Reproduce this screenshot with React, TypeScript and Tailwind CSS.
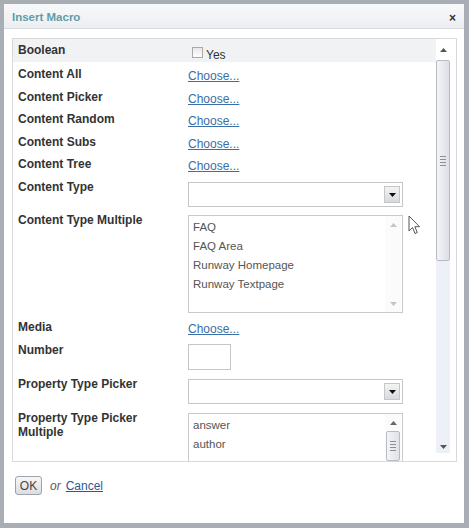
import React from "react";

const label = "text-[12px] font-bold text-[#333] leading-[22px]";
const link = "text-[12px] text-[#3a6ea5] underline leading-[22px]";

function Choose() {
  return <a href="#" className={link}>Choose...</a>;
}

function Row({ name, h, children }: { name: string; h: string; children?: React.ReactNode }) {
  return (
    <div className={`flex items-start ${h}`}>
      <div className={`w-[170px] shrink-0 pt-[1px] ${label}`}>{name}</div>
      <div className="flex-1 pt-[1px]">{children}</div>
    </div>
  );
}

function DropButton() {
  return (
    <div className="flex h-[17px] w-[16px] items-center justify-center border border-[#c4c7cc] bg-gradient-to-b from-[#f4f4f4] to-[#d8d9dc]">
      <svg width="7" height="4" viewBox="0 0 7 4">
        <path d="M0 0h7L3.5 4z" fill="#111" />
      </svg>
    </div>
  );
}

function Select() {
  return (
    <div className="mt-[6px] flex h-[25px] w-[215px] items-center justify-end border border-[#c6c6c6] bg-white pr-[2px]">
      <DropButton />
    </div>
  );
}

function Arrow({ up, color = "#777" }: { up?: boolean; color?: string }) {
  return (
    <svg width="7" height="4" viewBox="0 0 7 4">
      <path d={up ? "M0 4h7L3.5 0z" : "M0 0h7L3.5 4z"} fill={color} />
    </svg>
  );
}

function Grip() {
  return (
    <div className="flex flex-col gap-[2px]">
      <div className="h-px w-[6px] bg-[#8a8f98]" />
      <div className="h-px w-[6px] bg-[#8a8f98]" />
      <div className="h-px w-[6px] bg-[#8a8f98]" />
      <div className="h-px w-[6px] bg-[#8a8f98]" />
    </div>
  );
}

function ListBox({ items, thumb }: { items: string[]; thumb?: boolean }) {
  return (
    <div className="mt-[6px] flex h-[98px] w-[215px] border border-[#c9c9c9] bg-white">
      <div className="flex-1 pl-[4px] pt-[2px]">
        {items.map((i) => (
          <div key={i} className="text-[11.5px] leading-[19px] text-[#555]">
            {i}
          </div>
        ))}
      </div>
      <div className="mr-[1px] flex w-[16px] flex-col items-center bg-[#fbfbfc]">
        <div className="flex h-[17px] items-center justify-center">
          <Arrow up color={thumb ? "#666" : "#c4c4c4"} />
        </div>
        {thumb ? (
          <div className="flex h-[30px] w-[14px] items-center justify-center rounded-[2px] border border-[#b7bcc4] bg-gradient-to-r from-[#f3f4f6] to-[#dfe2e7]">
            <Grip />
          </div>
        ) : (
          <>
            <div className="flex-1" />
            <div className="flex h-[16px] items-center justify-center">
              <Arrow color="#c4c4c4" />
            </div>
          </>
        )}
      </div>
    </div>
  );
}

export default function App() {
  return (
    <div className="relative h-[528px] w-[469px] bg-[#a9aeb5] pl-[4px] pt-[4px] font-['Liberation_Sans',Arial,sans-serif]">
      <div className="flex h-[519px] w-[460px] flex-col bg-white">
        {/* title bar */}
        <div className="flex h-[25px] shrink-0 items-center justify-between border-b border-[#d6d9dd] bg-gradient-to-b from-[#f8f9fa] to-[#eceef1] pl-[8px] pr-[8px] pt-[3px]">
          <span className="text-[11.5px] font-bold text-[#5d9ea8]">Insert Macro</span>
          <span className="text-[12px] font-bold leading-none text-[#333]">×</span>
        </div>

        {/* property panel */}
        <div className="ml-[8px] mt-[9px] flex h-[424px] w-[445px] border border-[#d9d9d9] bg-white">
          <div className="flex-1 overflow-hidden">
            <div className="flex h-[23px] items-start bg-[#f1f2f4] pl-[5px]">
              <div className={`w-[170px] shrink-0 ${label}`}>Boolean</div>
              <div className="ml-[4px] mt-[8px] h-[11px] w-[11px] border border-[#a9a9a9] bg-gradient-to-b from-[#e8e8e8] to-white" />
              <span className="ml-[3px] mt-[10px] text-[12px] leading-[12px] text-[#333]">Yes</span>
            </div>
            <div className="pl-[5px]">
              <Row name="Content All" h="h-[22.5px]"><Choose /></Row>
              <Row name="Content Picker" h="h-[22.5px]"><Choose /></Row>
              <Row name="Content Random" h="h-[22.5px]"><Choose /></Row>
              <Row name="Content Subs" h="h-[22.5px]"><Choose /></Row>
              <Row name="Content Tree" h="h-[23px]"><Choose /></Row>
              <Row name="Content Type" h="h-[33px]">
                <Select />
              </Row>
              <Row name="Content Type Multiple" h="h-[107px]">
                <ListBox items={["FAQ", "FAQ Area", "Runway Homepage", "Runway Textpage"]} />
              </Row>
              <Row name="Media" h="h-[23px]"><Choose /></Row>
              <Row name="Number" h="h-[34px]">
                <div className="mt-[5px] h-[26px] w-[43px] border border-[#c6c6c6] bg-white" />
              </Row>
              <Row name="Property Type Picker" h="h-[35px]">
                <Select />
              </Row>
              <div className="flex items-start">
                <div className="w-[170px] shrink-0 pt-[4px] text-[12px] font-bold leading-[14px] text-[#333]">
                  Property Type Picker
                  <br />
                  Multiple
                </div>
                <ListBox items={["answer", "author"]} thumb />
              </div>
            </div>
          </div>

          {/* main scrollbar */}
          <div className="mr-[6px] flex w-[14px] flex-col items-center">
            <div className="flex h-[21px] w-full items-center justify-center">
              <Arrow up color="#555" />
            </div>
            <div className="flex h-[201px] w-[14px] items-center justify-center rounded-[2px] border border-[#b6bbc4] bg-gradient-to-r from-[#f4f5f8] to-[#dcdfe6]">
              <Grip />
            </div>
            <div className="w-full flex-1 bg-[#eef0f7]" />
            <div className="flex h-[12px] w-full items-center justify-center bg-[#eef0f7]">
              <Arrow color="#555" />
            </div>
            <div className="h-[8px]" />
          </div>
        </div>

        {/* footer */}
        <div className="ml-[11px] mt-[14px] flex items-center">
          <button className="h-[19px] w-[27px] rounded-[3px] border border-[#9ea4ab] bg-gradient-to-b from-[#f7f7f7] to-[#dcdde0] text-[12px] leading-none text-[#444]">
            OK
          </button>
          <span className="ml-[8px] text-[12px] italic text-[#555]">or</span>
          <a href="#" className="ml-[5px] text-[12px] text-[#2d5797] underline">
            Cancel
          </a>
        </div>
      </div>

      {/* mouse cursor */}
      <svg className="absolute left-[408px] top-[215px]" width="13" height="20" viewBox="0 0 13 20">
        <path d="M1 1 L1 16 L4.5 12.5 L7 18.5 L9.3 17.5 L6.8 11.7 L11.5 11.7 Z" fill="#fff" stroke="#555" strokeWidth="1" strokeLinejoin="round" />
      </svg>
    </div>
  );
}
